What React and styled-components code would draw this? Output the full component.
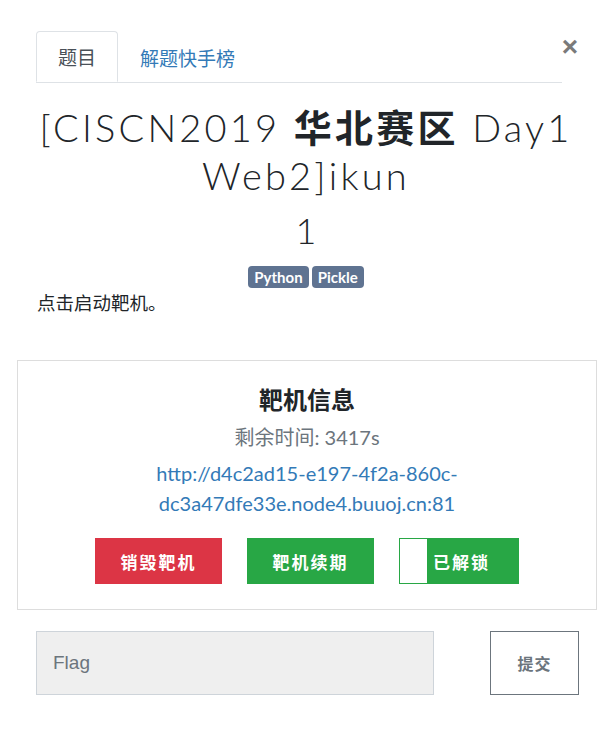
import React from 'react';
import styled, { createGlobalStyle } from 'styled-components';

const GlobalStyle = createGlobalStyle`
    body {
        margin: 0;
        background: #fff;
        font-family: Lato, "Noto Sans CJK SC", sans-serif;
        color: #212529;
    }
`;

const Modal = styled.div`
    width: 612px;
    height: 749px;
    box-sizing: border-box;
    padding: 31px 0 0;
    position: relative;
`;

const TabBar = styled.div`
    display: flex;
    margin: 0 50px 0 36px;
    border-bottom: 1px solid #dee2e6;
    height: 51px;
`;

const Tab = styled.div`
    display: flex;
    align-items: center;
    padding: 0 21px;
    height: 51px;
    box-sizing: border-box;
    font-size: 19px;
    color: ${p => (p.$active ? '#495057' : '#337ab7')};
    border: 1px solid ${p => (p.$active ? '#dee2e6' : 'transparent')};
    border-bottom: ${p => (p.$active ? '1px solid #fff' : 'none')};
    border-radius: 4px 4px 0 0;
    background: ${p => (p.$active ? '#fff' : 'transparent')};
    margin-bottom: -1px;
`;

const Close = styled.span`
    position: absolute;
    top: 33px;
    right: 34px;
    font-size: 28px;
    font-weight: 700;
    color: #7a7a7a;
    line-height: 1;
    font-family: "Liberation Sans", sans-serif;
`;

const Title = styled.h1`
    margin: 20px 10px 0;
    text-align: center;
    font-family: Lato, "Noto Sans CJK SC", sans-serif;
    font-weight: 300;
    font-size: 38px;
    line-height: 48px;
    letter-spacing: 3.2px;
    color: #212529;
`;

const TitleCjk = styled.span`
    font-weight: 700;
`;

const Points = styled.div`
    text-align: center;
    font-family: Lato, sans-serif;
    font-weight: 300;
    font-size: 36px;
    line-height: 48px;
    margin-top: 7px;
    color: #212529;
`;

const Tags = styled.div`
    display: flex;
    justify-content: center;
    gap: 3px;
    margin-top: 12px;
`;

const Tag = styled.span`
    background: #5f7391;
    color: #fff;
    font-family: Lato, sans-serif;
    font-weight: 700;
    font-size: 15px;
    line-height: 22px;
    padding: 0 6px;
    border-radius: 4px;
`;

const Desc = styled.p`
    margin: 3px 37px 0;
    font-size: 18.5px;
    line-height: 24px;
`;

const InfoBox = styled.div`
    margin: 45px 15px 0 17px;
    border: 1px solid #ddd;
    padding: 24px 0 25px;
    display: flex;
    flex-direction: column;
    align-items: center;
`;

const InfoTitle = styled.div`
    font-size: 24px;
    font-weight: 700;
    line-height: 30px;
`;

const Remain = styled.div`
    font-size: 20px;
    color: #6c757d;
    line-height: 24px;
    margin-top: 10px;
`;

const Link = styled.a`
    display: block;
    text-align: center;
    color: #337ab7;
    font-size: 20px;
    line-height: 30px;
    text-decoration: none;
    margin-top: 9px;
    max-width: 330px;
`;

const Actions = styled.div`
    display: flex;
    gap: 25px;
    margin-top: 20px;
`;

const ActionButton = styled.button`
    width: 127px;
    height: 46px;
    border: none;
    background: ${p => p.$bg};
    color: #fff;
    font-family: "Noto Sans CJK SC", sans-serif;
    font-weight: 700;
    font-size: 17px;
    letter-spacing: 2px;
    padding: 0;
`;

const Toggle = styled.div`
    width: 120px;
    height: 46px;
    box-sizing: border-box;
    border: 1px solid #28a745;
    display: flex;
`;

const ToggleKnob = styled.div`
    width: 27px;
    background: #fff;
`;

const ToggleLabel = styled.div`
    flex: 1;
    background: #28a745;
    color: #fff;
    display: flex;
    align-items: center;
    justify-content: center;
    font-family: "Noto Sans CJK SC", sans-serif;
    font-weight: 700;
    font-size: 17px;
    letter-spacing: 2px;
    padding-right: 22px;
`;

const FlagRow = styled.div`
    display: flex;
    justify-content: space-between;
    margin: 21px 33px 0 36px;
`;

const FlagInput = styled.input`
    width: 398px;
    height: 64px;
    box-sizing: border-box;
    background: #efefef;
    border: 1px solid #ced4da;
    padding: 0 16px;
    font-family: "Liberation Sans", sans-serif;
    font-size: 19px;
    color: #495057;
    outline: none;
    &::placeholder {
        color: #6c757d;
    }
`;

const SubmitButton = styled.button`
    width: 89px;
    height: 64px;
    background: #fff;
    border: 1px solid #6c757d;
    color: #6c757d;
    font-family: "Noto Sans CJK SC", sans-serif;
    font-weight: 700;
    font-size: 16px;
    letter-spacing: 1px;
`;

const App = () => {
    return (
        <Modal>
            <GlobalStyle />
            <TabBar>
                <Tab $active>题目</Tab>
                <Tab>解题快手榜</Tab>
            </TabBar>
            <Close>×</Close>
            <Title>
                [CISCN2019 <TitleCjk>华北赛区</TitleCjk> Day1 Web2]ikun
            </Title>
            <Points>1</Points>
            <Tags>
                <Tag>Python</Tag>
                <Tag>Pickle</Tag>
            </Tags>
            <Desc>点击启动靶机。</Desc>
            <InfoBox>
                <InfoTitle>靶机信息</InfoTitle>
                <Remain>剩余时间: 3417s</Remain>
                <Link href="#">http://d4c2ad15-e197-4f2a-860c-dc3a47dfe33e.node4.buuoj.cn:81</Link>
                <Actions>
                    <ActionButton $bg="#dc3545">销毁靶机</ActionButton>
                    <ActionButton $bg="#28a745">靶机续期</ActionButton>
                    <Toggle>
                        <ToggleKnob />
                        <ToggleLabel>已解锁</ToggleLabel>
                    </Toggle>
                </Actions>
            </InfoBox>
            <FlagRow>
                <FlagInput placeholder="Flag" />
                <SubmitButton>提交</SubmitButton>
            </FlagRow>
        </Modal>
    );
};

export default App;
